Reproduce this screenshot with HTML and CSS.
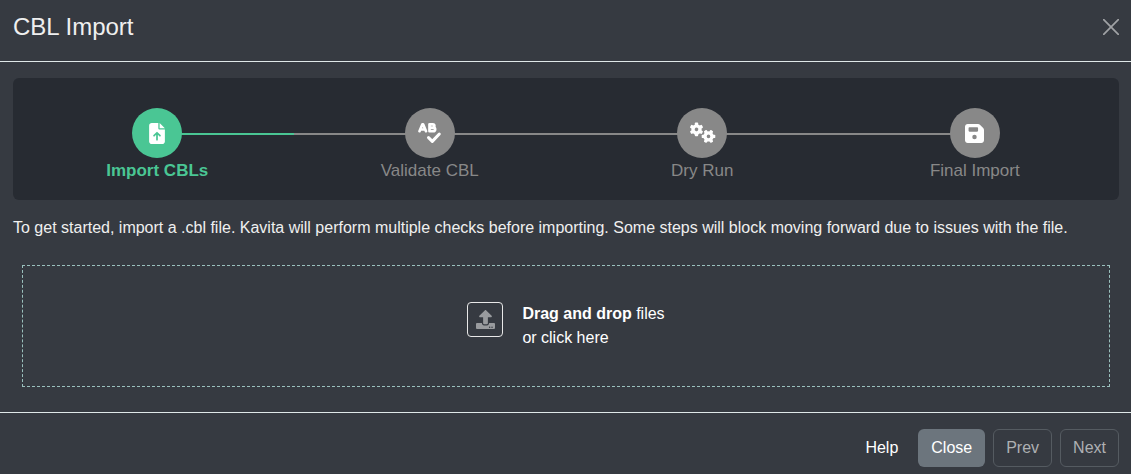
FILE: index.html
```html
<!DOCTYPE html>
<html lang="en">
<head>
<meta charset="utf-8">
<title>CBL Import</title>
<link rel="stylesheet" href="styles.css">
</head>
<body>
<div class="modal">
  <header class="modal-header">
    <h4 class="modal-title">CBL Import</h4>
    <button class="close-icon" aria-label="Close"><svg width="16" height="16" viewBox="0 0 16 16"><path d="M.7.7l14.6 14.6M15.3.7L.7 15.3" stroke="currentColor" stroke-width="1.7" stroke-linecap="round"/></svg></button>
  </header>
  <main class="modal-body">
    <div class="stepper">
      <div class="step active">
        <div class="circle"><svg width="16" height="21" viewBox="0 0 384 512"><path fill="#fff" d="M64 0C28.700 0 0 28.700 0 64V448c0 35.300 28.700 64 64 64H320c35.300 0 64-28.700 64-64V160H256c-17.700 0-32-14.300-32-32V0H64zM256 0V128H384L256 0z"/><path d="M192 406V250M120 310l72-72 72 72" fill="none" stroke="#4ac694" stroke-width="42" stroke-linecap="round" stroke-linejoin="round"/></svg></div>
        <div class="label">Import CBLs</div>
      </div>
      <div class="step">
        <div class="circle"><svg width="25" height="22" viewBox="0 0 25 22" fill="none" stroke="#fff" stroke-width="2.700" stroke-linecap="round" stroke-linejoin="round"><path d="M2.500 9.200L5.400 2.300h.7L9 9.200M3.800 7.500h4"/><path d="M12.500 2.300h3.200a1.700 1.700 0 0 1 0 3.400h-3.200zM12.500 5.700h3.900a1.750 1.750 0 0 1 0 3.500h-3.900z"/><path stroke-width="3" d="M11.500 15.600l3.800 3.800 7-7.400"/></svg></div>
        <div class="label">Validate CBL</div>
      </div>
      <div class="step">
        <div class="circle"><svg width="27" height="22" viewBox="0 0 27 22"><defs><g id="gear"><circle r="3.500" fill="none" stroke="#fff" stroke-width="3.400"/><g fill="#fff"><rect id="tooth" x="4" y="-1.700" width="2.800" height="3.400" rx=".9"/><use href="#tooth" transform="rotate(60)"/><use href="#tooth" transform="rotate(120)"/><use href="#tooth" transform="rotate(180)"/><use href="#tooth" transform="rotate(240)"/><use href="#tooth" transform="rotate(300)"/></g></g></defs><use href="#gear" transform="translate(7.500 7.400) rotate(30)"/><use href="#gear" transform="translate(19.500 14.400)"/></svg></div>
        <div class="label">Dry Run</div>
      </div>
      <div class="step">
        <div class="circle"><svg width="19" height="19" viewBox="0 0 448 448"><path fill="#fff" fill-rule="evenodd" d="M64 0C28.700 0 0 28.700 0 64V384c0 35.300 28.700 64 64 64H384c35.300 0 64-28.700 64-64V141.300c0-17-6.700-33.300-18.700-45.300L352 18.700C340 6.700 323.700 0 306.700 0H64zM84 96c0-12 8-20 20-20H288c12 0 20 8 20 20v64c0 12-8 20-20 20H104c-12 0-20-8-20-20V96zM224 256a53 53 0 1 1 0 106 53 53 0 1 1 0-106z"/></svg></div>
        <div class="label">Final Import</div>
      </div>
    </div>
    <p class="intro">To get started, import a .cbl file. Kavita will perform multiple checks before importing. Some steps will block moving forward due to issues with the file.</p>
    <div class="dropzone">
      <div class="upload"><svg width="19" height="19" viewBox="0 0 512 512"><path fill="#999b9e" fill-rule="evenodd" d="M296 384h-80c-13.300 0-24-10.700-24-24V192h-87.700c-17.800 0-26.700-21.500-14.100-34.100L242.300 5.700c7.500-7.500 19.800-7.500 27.300 0l152.200 152.200c12.600 12.600 3.700 34.100-14.100 34.100H320v168c0 13.300-10.700 24-24 24zm216-8v112c0 13.300-10.700 24-24 24H24c-13.300 0-24-10.700-24-24V376c0-13.300 10.700-24 24-24h136v8c0 30.900 25.100 56 56 56h80c30.900 0 56-25.100 56-56v-8h136c13.300 0 24 10.700 24 24zm-124 88a20 20 0 1 0-40 0 20 20 0 1 0 40 0zm64 0a20 20 0 1 0-40 0 20 20 0 1 0 40 0z"/></svg></div>
      <div class="drop-text"><strong>Drag and drop</strong> files<br>or click here</div>
    </div>
  </main>
  <footer class="modal-footer">
    <a class="btn help">Help</a>
    <button class="btn primary">Close</button>
    <button class="btn disabled prev">Prev</button>
    <button class="btn disabled">Next</button>
  </footer>
</div>
</body>
</html>
```
FILE: styles.css
```css
* { box-sizing: border-box; }
body { margin: 0; background: #363a41; color: #efefef; font: 16px/24px "Liberation Sans", Arial, sans-serif; }
.modal { height: 474px; display: flex; flex-direction: column; }
.modal-header { height: 62px; display: flex; justify-content: space-between; padding: 12px 12px 0 13px; border-bottom: 1px solid #dfe8e8; }
.modal-title { margin: 0; font-size: 24px; line-height: 29px; font-weight: 400; }
.close-icon { width: 16px; height: 16px; margin-top: 7px; padding: 0; border: 0; background: none; color: #a0a2a5; }
.close-icon svg { display: block; }
.modal-body { height: 350px; padding: 16px 12px 0 13px; }
.stepper { display: flex; height: 122px; padding: 30px 8px 0; border-radius: 6px; background: #272b32; }
.step { flex: 1; display: flex; flex-direction: column; align-items: center; position: relative; color: #888; }
.step::before, .step::after { content: ""; position: absolute; top: 25px; width: 50%; height: 2px; background: #888; }
.step::before { left: 0; }
.step::after { left: 50%; }
.step:first-child::before, .step:last-child::after { display: none; }
.circle { position: relative; z-index: 1; width: 50px; height: 50px; border-radius: 50%; background: #888; display: flex; align-items: center; justify-content: center; }
.label { font-size: 17px; line-height: 26px; }
.active { color: #4ac694; font-weight: 700; }
.active .circle, .active::after { background: #4ac694; }
.intro { margin: 16px 0 0; white-space: nowrap; }
.dropzone { height: 122px; margin: 25px 9px 0; border: 1px dashed #9ac0bd; display: flex; justify-content: center; padding-top: 36px; gap: 19px; }
.upload { width: 36px; height: 35px; border: 1px solid #e8e8e8; border-radius: 4px; display: flex; align-items: center; justify-content: center; }
.drop-text { color: #fff; }
.modal-footer { height: 62px; border-top: 1px solid #dfe8e8; padding: 16px 12px 0; display: flex; justify-content: flex-end; gap: 8px; }
.btn { height: 38px; border: 1px solid transparent; border-radius: 6px; padding: 6px 12px; background: none; color: #fff; font: inherit; }
.help { padding-right: 11px; }
.primary { background: #6c757d; }
.disabled { color: #aeb0b3; border-color: #555b61; }
```
